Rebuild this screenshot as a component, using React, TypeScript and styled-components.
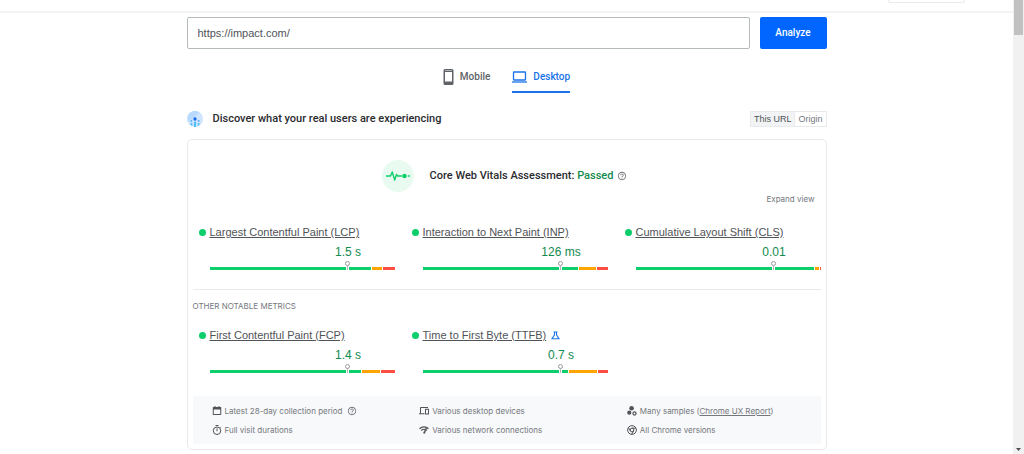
import React from "react";
import styled, { createGlobalStyle } from "styled-components";
import { MdHelpOutline } from "react-icons/md";

const color = {
  ink: "#2b2c2f",
  text: "#505357",
  muted: "#74787d",
  line: "#e8eaed",
  panel: "#f8f9fa",
  blue: "#1a73e8",
  action: "#0066ff",
  good: "#0cce6b",
  goodText: "#128a4e",
  warn: "#ffa400",
  bad: "#ff4e42",
};

const GlobalStyle = createGlobalStyle`
  *, *::before, *::after { box-sizing: border-box; }
  body {
    margin: 0;
    background: #fff;
    color: ${color.text};
    font-family: "Liberation Sans", Arial, sans-serif;
    font-size: 11px;
    line-height: 16px;
  }
  button, input { font: inherit; color: inherit; }
  button { padding: 0; border: 0; background: none; cursor: pointer; }
  h2, h3, p, ul { margin: 0; padding: 0; font: inherit; }
  ul { list-style: none; }
  svg { display: block; flex: none; }
`;

const display = `font-family: Roboto, "Liberation Sans", sans-serif; font-weight: 500;`;
const small = `font-family: Inter, "Liberation Sans", sans-serif; font-size: 8px; line-height: 14px;`;

const Window = styled.div`
  display: grid;
  grid-template-columns: minmax(0, 1fr) 11px;
  min-height: 100vh;
`;

const Scrollbar = styled.div`
  display: flex;
  flex-direction: column;
  justify-content: space-between;
  align-items: center;
  background: #f1f1f1;
  padding-bottom: 3px;
`;

const Thumb = styled.div`
  width: 9px;
  height: 35px;
  background: #c1c1c1;
`;

const Header = styled.header`
  display: flex;
  justify-content: flex-end;
  height: 13px;
  padding-right: 48px;
  border-bottom: 2px solid #f3f3f4;
`;

const HeaderMenu = styled.div`
  width: 77px;
  height: 3px;
  border: 1px solid ${color.line};
  border-top: 0;
  border-radius: 0 0 3px 3px;
`;

const Main = styled.main`
  width: 100%;
  max-width: 640px;
  margin: 0 auto;
  padding-top: 4px;
`;

const UrlForm = styled.form`
  display: flex;
  gap: 10px;
  height: 32px;
`;

const UrlInput = styled.input`
  flex: 1;
  min-width: 0;
  padding: 0 10px;
  border: 1px solid #b4bbb9;
  border-radius: 2px;
  background: #fff;
  outline: none;
`;

const AnalyzeButton = styled.button`
  ${display}
  width: 67px;
  border-radius: 2px;
  background: ${color.action};
  color: #fff;
  font-size: 10px;
`;

const Tabs = styled.div`
  display: flex;
  justify-content: center;
  gap: 22px;
  padding: 12px 0 18px;
`;

const Tab = styled.button<{ $active?: boolean }>`
  ${display}
  display: flex;
  align-items: center;
  gap: 6px;
  height: 32px;
  padding-top: 2px;
  font-size: 10px;
  color: ${(p) => (p.$active ? color.blue : "#5f6368")};
  border-bottom: 2px solid ${(p) => (p.$active ? color.blue : "transparent")};
`;

const SectionHead = styled.div`
  display: flex;
  align-items: center;
  gap: 10px;
  height: 16px;
`;

const SectionTitle = styled.h2`
  ${display}
  flex: 1;
  color: ${color.ink};
  font-size: 11px;
`;

const Toggle = styled.div`
  display: flex;
  border: 1px solid ${color.line};
`;

const ToggleButton = styled.button<{ $active?: boolean }>`
  padding: 0 3px;
  font-size: 9px;
  line-height: 14px;
  color: ${(p) => (p.$active ? color.text : color.muted)};
  background: ${(p) => (p.$active ? "#f1f3f4" : "#fff")};
  & + & { border-left: 1px solid ${color.line}; }
`;

const Card = styled.section`
  margin-top: 12px;
  padding: 20px 5px 5px;
  border: 1px solid ${color.line};
  border-radius: 5px;
`;

const Assessment = styled.div`
  display: flex;
  align-items: center;
  justify-content: center;
  padding-right: 4px;
`;

const AssessmentTitle = styled.h3`
  ${display}
  margin: 0 4px 0 16px;
  color: ${color.ink};
  font-size: 11px;
`;

const Passed = styled.span`
  color: ${color.goodText};
`;

const HelpButton = styled.button`
  color: ${color.muted};
`;

const ExpandRow = styled.div`
  display: flex;
  justify-content: flex-end;
  padding-right: 6px;
`;

const ExpandButton = styled.button`
  ${small}
  color: ${color.muted};
`;

const Metrics = styled.div`
  display: grid;
  grid-template-columns: repeat(3, minmax(0, 1fr));
  gap: 17px;
  padding: 18px 0 0 6px;
`;

const OtherMetrics = styled(Metrics)`
  padding-top: 14px;
`;

const MetricName = styled.div`
  display: flex;
  align-items: center;
  gap: 4px;
  height: 16px;
`;

const Dot = styled.span`
  width: 7px;
  height: 7px;
  border-radius: 50%;
  background: ${color.good};
`;

const MetricLink = styled.a`
  color: ${color.text};
  text-underline-offset: 1px;
`;

const Experimental = styled.span`
  margin-left: 1px;
  color: ${color.blue};
`;

const MetricValue = styled.p`
  margin: 4px 0 7px 103px;
  color: ${color.goodText};
  font-size: 12px;
  text-align: center;
`;

const Track = styled.div`
  position: relative;
  display: flex;
  gap: 1px;
  height: 3px;
  margin-left: 11px;
`;

const Segment = styled.span<{ $share: number; $tone: "good" | "warn" | "bad" }>`
  flex: ${(p) => p.$share} 0 0;
  background: ${(p) => color[p.$tone]};
`;

const Pin = styled.span`
  position: absolute;
  left: 75%;
  bottom: 0;
  width: 3px;
  height: 4px;
  margin-left: -2px;
  background: linear-gradient(90deg, #fff 1px, #b4b4b4 1px 2px, #fff 2px);
  &::before {
    content: "";
    position: absolute;
    bottom: 4px;
    left: -1px;
    width: 5px;
    height: 5px;
    border: 1px solid #9a9a9a;
    border-radius: 50%;
    background: #fff;
  }
`;

const OtherTitle = styled.h3`
  ${small}
  margin-top: 19px;
  padding-top: 9px;
  border-top: 1px solid ${color.line};
  color: ${color.muted};
`;

const Facts = styled.ul`
  display: grid;
  grid-template-columns: repeat(3, minmax(0, 1fr));
  gap: 5px 14px;
  margin-top: 23px;
  padding: 8px 0 7px 19px;
  background: ${color.panel};
`;

const Fact = styled.li`
  ${small}
  display: flex;
  align-items: center;
  gap: 3px;
  color: ${color.muted};
  white-space: nowrap;
  & > svg { color: ${color.text}; }
`;

const FactLink = styled.a`
  color: inherit;
`;

const FactHelp = styled(HelpButton)`
  margin-left: 2px;
`;

type MetricData = {
  name: string;
  value: string;
  shares: [number, number, number];
  experimental?: boolean;
};

const coreMetrics: MetricData[] = [
  { name: "Largest Contentful Paint (LCP)", value: "1.5 s", shares: [162, 10, 12] },
  { name: "Interaction to Next Paint (INP)", value: "126 ms", shares: [156, 17, 11] },
  { name: "Cumulative Layout Shift (CLS)", value: "0.01", shares: [178, 4, 1] },
];

const otherMetrics: MetricData[] = [
  { name: "First Contentful Paint (FCP)", value: "1.4 s", shares: [151, 18, 14] },
  { name: "Time to First Byte (TTFB)", value: "0.7 s", shares: [146, 28, 10], experimental: true },
];

const PhoneIcon = () => (
  <svg width="11" height="16" viewBox="0 0 11 16" fill="currentColor" aria-hidden="true">
    <path fillRule="evenodd" d="M2 0h7a1.500 1.500 0 0 1 1.500 1.500v13A1.500 1.500 0 0 1 9 16H2A1.500 1.500 0 0 1 .5 14.500v-13A1.500 1.500 0 0 1 2 0Zm0 3v9.500h7V3ZM2 1.200v.6h7v-.6Z" />
  </svg>
);

const LaptopIcon = () => (
  <svg width="15" height="12" viewBox="0 0 15 12" fill="none" stroke="currentColor" aria-hidden="true">
    <rect x="1.500" y="1" width="12" height="8" rx="0.500" strokeWidth="1.300" />
    <path d="M0 11h15" strokeWidth="1.300" />
  </svg>
);

const UsersIcon = () => (
  <svg width="16" height="16" viewBox="0 0 48 48" aria-hidden="true">
    <circle cx="24" cy="24" r="24" fill="#cfe5ff" />
    <path d="M2 15A24 24 0 0 1 38 4L24 17 2 32Z" fill="#b9d9fe" />
    <path d="M21 32h6v16h-6zM11 36h5v9l-5-3zM32 36h5v6l-5 3z" fill="#4cbcfb" />
    <circle cx="24" cy="24" r="5" fill="#1769ed" />
    <circle cx="13" cy="30" r="3" fill="#5fb0f8" />
    <circle cx="35" cy="30" r="3" fill="#5fb0f8" />
  </svg>
);

const PulseIcon = () => (
  <svg width="32" height="32" viewBox="0 0 32 32" aria-hidden="true">
    <circle cx="16" cy="16" r="16" fill="#e9faf1" />
    <path
      d="M4.500 16h4l1.700-4 2.500 8 1.800-5.500 1.200 1.500H19M26.500 16h1"
      fill="none"
      stroke={color.good}
      strokeWidth="1.400"
      strokeLinecap="round"
      strokeLinejoin="round"
    />
    <path d="M19 16h6" stroke={color.good} strokeWidth="0.800" />
    <circle cx="22.500" cy="16" r="2.200" fill={color.good} />
  </svg>
);

const FlaskIcon = () => (
  <svg width="9" height="9" viewBox="0 0 18 18" fill="none" stroke="currentColor" strokeWidth="2.200" aria-label="Experimental">
    <path d="M5 2h8M7 2v5.500L2 15.500h14L11 7.500V2" />
  </svg>
);

const CalendarIcon = () => (
  <svg width="10" height="10" viewBox="0 0 20 20" fill="currentColor" aria-hidden="true">
    <path fillRule="evenodd" d="M5 0h2v2h6V0h2v2h2a1.500 1.500 0 0 1 1.500 1.500v13A1.500 1.500 0 0 1 17 18H3a1.500 1.500 0 0 1-1.500-1.500v-13A1.500 1.500 0 0 1 3 2h2Zm-1.500 7v9h13V7Z" />
  </svg>
);

const TimerIcon = () => (
  <svg width="10" height="10" viewBox="0 0 20 20" fill="none" stroke="currentColor" strokeWidth="2" aria-hidden="true">
    <circle cx="10" cy="11.500" r="7.500" />
    <path d="M7 1h6M10 7v5.500M15.500 6l1.500-1.500" />
  </svg>
);

const DevicesIcon = () => (
  <svg width="10" height="10" viewBox="0 0 20 20" fill="none" stroke="currentColor" strokeWidth="2" aria-hidden="true">
    <path d="M18 3H3v12M0 15.500h11" />
    <rect x="13" y="6.500" width="6" height="9.500" />
  </svg>
);

const NetworkIcon = () => (
  <svg width="10" height="10" viewBox="0 0 20 20" fill="none" stroke="currentColor" strokeWidth="2.600" aria-hidden="true">
    <path d="M1 7.500C6 2.500 14 2.500 19 7.500M4.500 11C7.500 8 12.500 8 15.500 11" />
    <path d="M14.500 5 9 15.500a1.500 1.500 0 0 0 2.600 1L15.500 5.500Z" fill="currentColor" strokeWidth="1" />
  </svg>
);

const SamplesIcon = () => (
  <svg width="10" height="10" viewBox="0 0 24 24" fill="currentColor" aria-hidden="true">
    <circle cx="11" cy="5.500" r="5.500" />
    <circle cx="5.500" cy="16" r="5" />
    <circle cx="18" cy="18" r="3.700" fill="none" stroke="currentColor" strokeWidth="3" />
  </svg>
);

const ChromeIcon = () => (
  <svg width="10" height="10" viewBox="0 0 24 24" fill="none" stroke="currentColor" strokeWidth="2.400" aria-hidden="true">
    <circle cx="12" cy="12" r="10.500" />
    <circle cx="12" cy="12" r="4.500" />
    <path d="M12 7.500h9.500M8.100 14.200 3.300 6M15.900 14.200 11 22.500" />
  </svg>
);

const Metric = ({ name, value, shares, experimental }: MetricData) => (
  <article>
    <MetricName>
      <Dot />
      <MetricLink href="#">{name}</MetricLink>
      {experimental && (
        <Experimental>
          <FlaskIcon />
        </Experimental>
      )}
    </MetricName>
    <MetricValue>{value}</MetricValue>
    <Track>
      <Segment $tone="good" $share={shares[0]} />
      <Segment $tone="warn" $share={shares[1]} />
      <Segment $tone="bad" $share={shares[2]} />
      <Pin />
    </Track>
  </article>
);

export default function App() {
  return (
    <>
      <GlobalStyle />
      <Window>
        <div>
          <Header>
            <HeaderMenu />
          </Header>
          <Main>
            <UrlForm onSubmit={(e) => e.preventDefault()}>
              <UrlInput type="text" aria-label="Web page URL" defaultValue="https://impact.com/" />
              <AnalyzeButton type="submit">Analyze</AnalyzeButton>
            </UrlForm>
            <Tabs role="tablist">
              <Tab role="tab" aria-selected={false}>
                <PhoneIcon />
                Mobile
              </Tab>
              <Tab role="tab" aria-selected $active>
                <LaptopIcon />
                Desktop
              </Tab>
            </Tabs>
            <SectionHead>
              <UsersIcon />
              <SectionTitle>Discover what your real users are experiencing</SectionTitle>
              <Toggle>
                <ToggleButton aria-pressed $active>This URL</ToggleButton>
                <ToggleButton aria-pressed={false}>Origin</ToggleButton>
              </Toggle>
            </SectionHead>
            <Card>
              <Assessment>
                <PulseIcon />
                <AssessmentTitle>
                  Core Web Vitals Assessment: <Passed>Passed</Passed>
                </AssessmentTitle>
                <HelpButton aria-label="About the assessment">
                  <MdHelpOutline size={10} />
                </HelpButton>
              </Assessment>
              <ExpandRow>
                <ExpandButton>Expand view</ExpandButton>
              </ExpandRow>
              <Metrics>
                {coreMetrics.map((m) => (
                  <Metric key={m.name} {...m} />
                ))}
              </Metrics>
              <OtherTitle>OTHER NOTABLE METRICS</OtherTitle>
              <OtherMetrics>
                {otherMetrics.map((m) => (
                  <Metric key={m.name} {...m} />
                ))}
              </OtherMetrics>
              <Facts>
                <Fact>
                  <CalendarIcon />
                  Latest 28-day collection period
                  <FactHelp aria-label="About the collection period">
                    <MdHelpOutline size={10} />
                  </FactHelp>
                </Fact>
                <Fact>
                  <DevicesIcon />
                  Various desktop devices
                </Fact>
                <Fact>
                  <SamplesIcon />
                  <span>
                    Many samples (<FactLink href="#">Chrome UX Report</FactLink>)
                  </span>
                </Fact>
                <Fact>
                  <TimerIcon />
                  Full visit durations
                </Fact>
                <Fact>
                  <NetworkIcon />
                  Various network connections
                </Fact>
                <Fact>
                  <ChromeIcon />
                  All Chrome versions
                </Fact>
              </Facts>
            </Card>
          </Main>
        </div>
        <Scrollbar aria-hidden="true">
          <Thumb />
          <svg width="5" height="3" viewBox="0 0 5 3">
            <path d="M0 0h5L2.500 3Z" fill="#505050" />
          </svg>
        </Scrollbar>
      </Window>
    </>
  );
}
